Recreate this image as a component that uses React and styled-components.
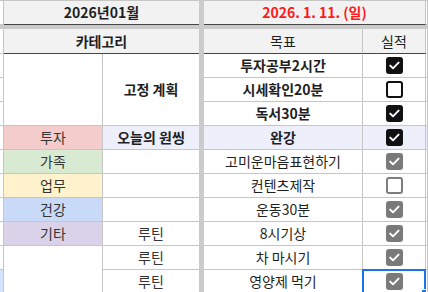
import React from "react";
import styled, { createGlobalStyle, css } from "styled-components";

const Global = createGlobalStyle`
  html, body { margin: 0; padding: 0; background: #ffffff; overflow: hidden; }
  body {
    font-family: "Noto Sans CJK KR", "Noto Sans", sans-serif;
    font-size: 14px;
    color: #1f1f1f;
  }
`;

const LINE = "#c6c6c6";
const DARK = "#454545";
const BAND = "#cbcbcb";

const Sheet = styled.div`
  display: grid;
  grid-template-columns: 4px 99px 96px 5px 159px 63px 1fr;
  grid-template-rows: 25px 4px 25px repeat(10, 24px);
  width: 428px;
  height: 292px;
  overflow: hidden;
`;

const Cell = styled.div`
  grid-row: ${(p) => p.$row};
  grid-column: ${(p) => p.$col};
  box-sizing: border-box;
  display: flex;
  align-items: center;
  justify-content: center;
  line-height: 1;
  white-space: nowrap;
  background: ${(p) => p.$bg || "#ffffff"};
  border-right: ${(p) => (p.$noRight ? "none" : `1px solid ${LINE}`)};
  border-bottom: 1px solid ${(p) => (p.$darkBottom ? DARK : LINE)};
  ${(p) => p.$top && css`border-top: 1px solid ${LINE};`}
  font-weight: ${(p) => (p.$bold ? 700 : 400)};
  color: ${(p) => p.$color || "#1f1f1f"};
  padding-bottom: 1px;
  position: relative;
`;

const HeaderCell = styled(Cell)`
  background: #f2f2f2;
`;

const VBand = styled.div`
  grid-row: 1 / -1;
  grid-column: 4;
  background: ${BAND};
`;

const HBand = styled.div`
  grid-row: 2;
  grid-column: 1 / -1;
  background: ${BAND};
`;

const Selection = styled.div`
  position: absolute;
  top: -1px;
  left: -1px;
  right: -1px;
  bottom: -1px;
  border: 2px solid #1a73e8;
  pointer-events: none;
  &::after {
    content: "";
    position: absolute;
    right: -5px;
    bottom: -5px;
    width: 6px;
    height: 6px;
    background: #1a73e8;
    border: 1px solid #ffffff;
  }
`;

const boxStyles = {
  on: { bg: "#111111", border: "#111111" },
  off: { bg: "#ffffff", border: "#111111" },
  grayOn: { bg: "#7a7a7a", border: "#7a7a7a" },
  grayOff: { bg: "#ffffff", border: "#7e7e7e" },
};

const Box = styled.span`
  box-sizing: border-box;
  width: 17px;
  height: 17px;
  border-radius: 3px;
  border: 2px solid ${(p) => boxStyles[p.$variant].border};
  background: ${(p) => boxStyles[p.$variant].bg};
  display: flex;
  align-items: center;
  justify-content: center;
  margin-top: 1px;
`;

function CheckBox({ variant }) {
  const checked = variant === "on" || variant === "grayOn";
  return (
    <Box $variant={variant}>
      {checked && (
        <svg width="13" height="13" viewBox="0 0 13 13">
          <path
            d="M2.2 6.6 L5 9.3 L10.6 3.6"
            fill="none"
            stroke="#ffffff"
            strokeWidth="1.9"
            strokeLinecap="round"
            strokeLinejoin="round"
          />
        </svg>
      )}
    </Box>
  );
}

const TINT = "#edf0fa";

const goals = [
  { text: "투자공부2시간", bold: true, check: "on" },
  { text: "시세확인20분", bold: true, check: "off" },
  { text: "독서30분", bold: true, check: "on" },
  { text: "완강", bold: true, check: "on", tint: true },
  { text: "고미운마음표현하기", check: "grayOn" },
  { text: "컨텐츠제작", check: "grayOff" },
  { text: "운동30분", check: "grayOn" },
  { text: "8시기상", check: "grayOn" },
  { text: "차 마시기", check: "grayOn" },
  { text: "영양제 먹기", check: "grayOn", selected: true },
];

const categories = [
  { row: 7, text: "투자", bg: "#f4cccc" },
  { row: 8, text: "가족", bg: "#d9ead3" },
  { row: 9, text: "업무", bg: "#fff2cc" },
  { row: 10, text: "건강", bg: "#c9daf8" },
  { row: 11, text: "기타", bg: "#d9d2e9" },
];

const plans = [
  { row: 8, text: "" },
  { row: 9, text: "" },
  { row: 10, text: "" },
  { row: 11, text: "루틴" },
  { row: 12, text: "루틴" },
  { row: 13, text: "루틴" },
];

export default function App() {
  return (
    <>
      <Global />
      <Sheet>
        {/* header row 1 */}
        <Cell $row={1} $col={1} $top />
        <HeaderCell $row={1} $col="2 / 4" $top $bold $darkBottom $noRight>
          2026년01월
        </HeaderCell>
        <HeaderCell $row={1} $col="5 / 7" $top $bold $darkBottom $color="#ff1a1a">
          2026. 1. 11. (일)
        </HeaderCell>
        <Cell $row={1} $col={7} $top />

        <HBand />

        {/* header row 2 */}
        <Cell $row={3} $col={1} />
        <HeaderCell $row={3} $col="2 / 4" $bold $darkBottom $noRight>
          카테고리
        </HeaderCell>
        <HeaderCell $row={3} $col={5} $darkBottom>
          목표
        </HeaderCell>
        <HeaderCell $row={3} $col={6} $darkBottom>
          실적
        </HeaderCell>
        <Cell $row={3} $col={7} />

        {/* column A */}
        {goals.map((g, i) => (
          <Cell key={`a${i}`} $row={i + 4} $col={1} $bg={i === 9 ? "#d3e3fd" : undefined} />
        ))}

        {/* column B */}
        <Cell $row="4 / 7" $col={2} />
        {categories.map((c) => (
          <Cell key={c.text} $row={c.row} $col={2} $bg={c.bg} $color="#333333">
            {c.text}
          </Cell>
        ))}
        <Cell $row="12 / 14" $col={2} />

        {/* column C */}
        <Cell $row="4 / 7" $col={3} $bold $noRight>
          고정 계획
        </Cell>
        <Cell $row={7} $col={3} $bold $noRight $bg={TINT}>
          오늘의 원씽
        </Cell>
        {plans.map((p) => (
          <Cell key={`c${p.row}`} $row={p.row} $col={3} $noRight $color="#333333">
            {p.text}
          </Cell>
        ))}

        <VBand />

        {/* columns D, E, F */}
        {goals.map((g, i) => (
          <React.Fragment key={g.text}>
            <Cell $row={i + 4} $col={5} $bold={g.bold} $bg={g.tint ? TINT : undefined}>
              {g.text}
            </Cell>
            <Cell $row={i + 4} $col={6} $bg={g.tint ? TINT : undefined}>
              <CheckBox variant={g.check} />
              {g.selected && <Selection />}
            </Cell>
            <Cell $row={i + 4} $col={7} $bg={g.tint ? TINT : undefined} />
          </React.Fragment>
        ))}
      </Sheet>
    </>
  );
}
